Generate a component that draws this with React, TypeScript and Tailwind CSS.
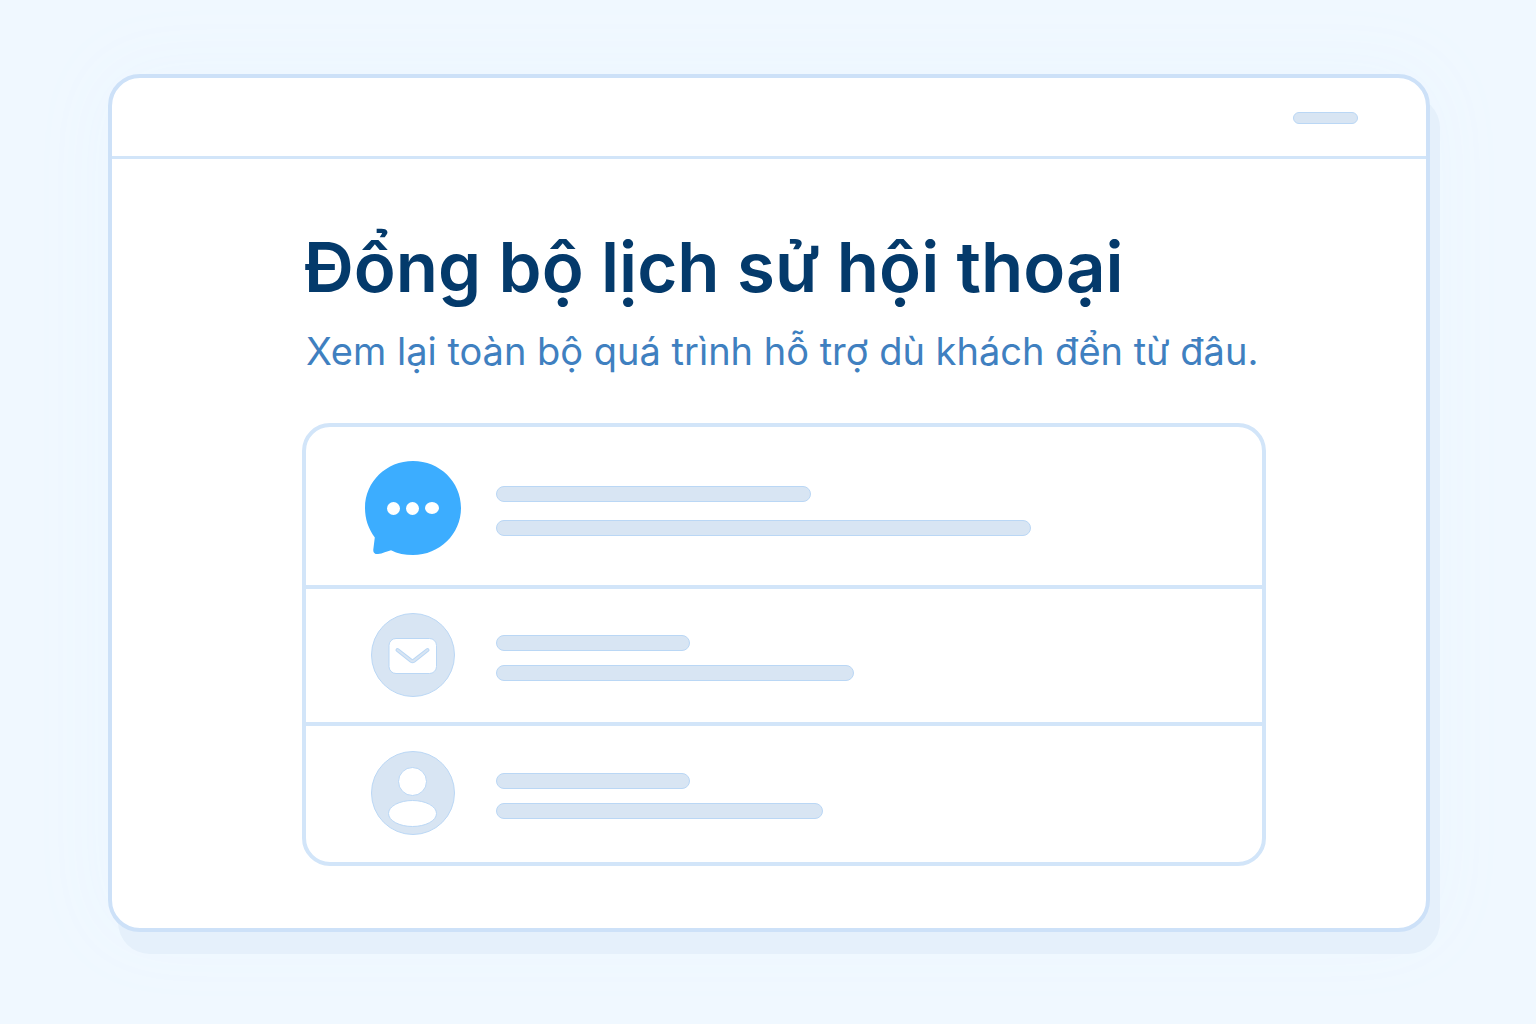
import type { ReactNode } from 'react';
import clsx from 'clsx';

interface HistoryRow {
    id: string;
    icon: ReactNode;
    rowClass: string;
    gapClass: string;
    lines: string[];
}

const ChatIcon = () => (
    <svg viewBox="0 0 96 96" className="h-24 w-24" aria-hidden="true">
        <path
            d="M48 1C74.500 1 96 21.500 96 48C96 74 74.500 95 48 95C40 95 32.500 93.500 26 90.200C22 91.200 17.500 93.500 13 94C9.800 94.300 8 92.500 8.300 89.500L9.800 77.500C3.500 69 0 59 0 48C0 21.500 21.500 1 48 1Z"
            fill="#3cadff"
        />
        <circle cx="28.500" cy="48.500" r="6.500" fill="#fff" />
        <circle cx="47.500" cy="48.500" r="6.500" fill="#fff" />
        <ellipse cx="67" cy="48" rx="7" ry="6" fill="#fff" />
    </svg>
);

const MailIcon = () => (
    <svg viewBox="0 0 84 84" className="h-21 w-21" aria-hidden="true">
        <circle cx="42" cy="42" r="41.500" fill="#d8e5f3" stroke="#bad7f5" />
        <rect x="18" y="25.500" width="47.500" height="35" rx="7" fill="#fff" stroke="#bad7f5" />
        <path
            d="M26.500 37L40 47.600Q41.500 48.800 43 47.600L56.500 37"
            fill="none"
            stroke="#bad7f5"
            strokeWidth="4"
            strokeLinecap="round"
        />
        <path
            d="M26.500 37L40 47.600Q41.500 48.800 43 47.600L56.500 37"
            fill="none"
            stroke="#d8e5f3"
            strokeWidth="2"
            strokeLinecap="round"
        />
    </svg>
);

const UserIcon = () => (
    <svg viewBox="0 0 84 84" className="h-21 w-21" aria-hidden="true">
        <circle cx="42" cy="42" r="41.500" fill="#d8e5f3" stroke="#bad7f5" />
        <circle cx="41.500" cy="30.500" r="14" fill="#fff" stroke="#bad7f5" />
        <ellipse cx="41.500" cy="62.500" rx="24" ry="13" fill="#fff" stroke="#bad7f5" />
    </svg>
);

const rows: HistoryRow[] = [
    {
        id: 'chat',
        icon: <ChatIcon />,
        rowClass: 'h-[158px] pt-1',
        gapClass: 'gap-[18px]',
        lines: ['w-[315px]', 'w-[535px]'],
    },
    {
        id: 'mail',
        icon: <MailIcon />,
        rowClass: 'h-[137px] border-t-4 pb-0.5',
        gapClass: 'gap-[14px]',
        lines: ['w-[194px]', 'w-[358px]'],
    },
    {
        id: 'user',
        icon: <UserIcon />,
        rowClass: 'h-[140px] border-t-4 pb-0.5',
        gapClass: 'gap-[14px]',
        lines: ['w-[194px]', 'w-[327px]'],
    },
];

const App = () => {
    return (
        <div className="min-h-screen bg-[#f0f8ff] pt-[74px] pr-[106px] pb-[92px] pl-[108px] font-['Inter','Noto_Sans',sans-serif]">
            <main className="rounded-[32px] border-4 border-[#cde1f8] bg-white shadow-[10px_22px_0_0_#e5f0fb,0_0_80px_0_#ecf6fe]">
                <header className="flex h-[81px] items-center justify-end border-b-3 border-[#d2e5f9] pt-0.5 pr-[68px]">
                    <div className="h-3 w-[65px] rounded-full border border-[#bad7f5] bg-[#d8e5f3]" />
                </header>

                <section className="pt-16 pr-[160px] pb-[62px] pl-[190px]">
                    <h1 className="pl-0.5 text-[69px] leading-[88px] font-semibold whitespace-nowrap text-[#043a6b]">
                        Đổng bộ lịch sử hội thoại
                    </h1>
                    <p className="mt-4 pl-1 text-[38px] leading-[48px] whitespace-nowrap text-[#3f80c0]">
                        Xem lại toàn bộ quá trình hỗ trợ dù khách đển từ đâu.
                    </p>

                    <ul className="mt-12 rounded-[28px] border-4 border-[#d2e5f9]">
                        {rows.map((row) => (
                            <li
                                key={row.id}
                                className={clsx('flex items-center gap-[35px] border-[#d2e5f9] pl-[59px]', row.rowClass)}
                            >
                                <div className="flex w-24 shrink-0 justify-center">{row.icon}</div>
                                <div className={clsx('flex flex-col pt-1.5', row.gapClass)}>
                                    {row.lines.map((width) => (
                                        <div
                                            key={width}
                                            className={clsx('h-4 rounded-full border border-[#bad7f5] bg-[#d8e5f3]', width)}
                                        />
                                    ))}
                                </div>
                            </li>
                        ))}
                    </ul>
                </section>
            </main>
        </div>
    );
};

export default App;
